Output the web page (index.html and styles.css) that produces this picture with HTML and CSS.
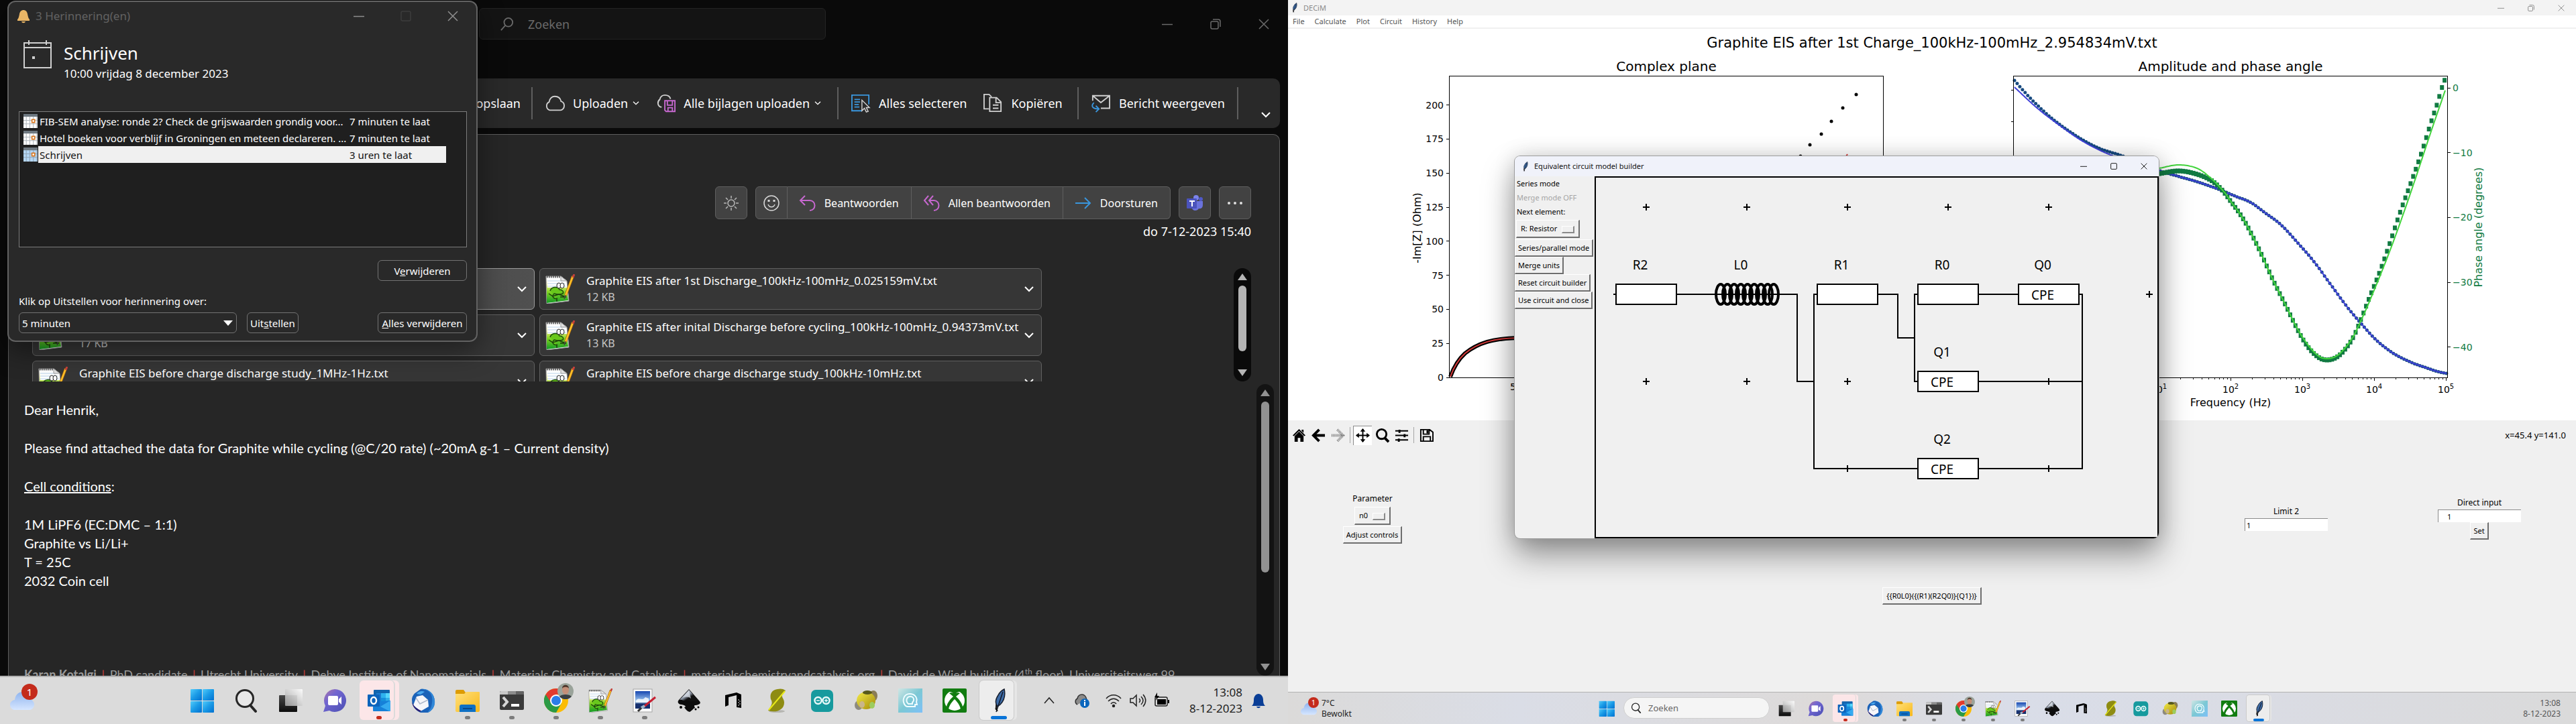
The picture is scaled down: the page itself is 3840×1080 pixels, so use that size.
FILE: index.html
```html
<!DOCTYPE html>
<html lang="nl">
<head>
<meta charset="utf-8">
<title>Bureaublad</title>
<link rel="stylesheet" href="styles.css">
</head>
<body>
<svg class="sprite" aria-hidden="true">
  <defs>
    <linearGradient id="gWin" x1="0" y1="0" x2="1" y2="1"><stop offset="0" stop-color="#52ccfb"/><stop offset=".5" stop-color="#1a9ae6"/><stop offset="1" stop-color="#0070d0"/></linearGradient>
    <linearGradient id="gDark" x1="0" y1="0" x2="0" y2="1"><stop offset="0" stop-color="#484848"/><stop offset="1" stop-color="#0c0c0c"/></linearGradient>
    <linearGradient id="gLight" x1="1" y1="0" x2="0" y2="1"><stop offset="0" stop-color="#fff"/><stop offset="1" stop-color="#a2a2a2"/></linearGradient>
    <linearGradient id="gChat" x1="0" y1="0" x2="1" y2="1"><stop offset="0" stop-color="#b277a4"/><stop offset=".35" stop-color="#7266d0"/><stop offset="1" stop-color="#4a50b4"/></linearGradient>
    <linearGradient id="gFold" x1="0" y1="0" x2="1" y2="1"><stop offset="0" stop-color="#ffe07a"/><stop offset="1" stop-color="#f8b81c"/></linearGradient>
    <linearGradient id="gCloud" x1="0" y1="0" x2="0" y2="1"><stop offset="0" stop-color="#8fb4ee"/><stop offset="1" stop-color="#d6e6ff"/></linearGradient>
    <linearGradient id="gInk" x1="0" y1="0" x2="1" y2="1"><stop offset="0" stop-color="#fff"/><stop offset=".45" stop-color="#8c95a4"/><stop offset=".6" stop-color="#111"/></linearGradient>
    <linearGradient id="gBall" x1="0" y1="0" x2="1" y2="1"><stop offset="0" stop-color="#f3ea4a"/><stop offset="1" stop-color="#a38a06"/></linearGradient>
    <linearGradient id="gAz" x1="0" y1="0" x2="1" y2="1"><stop offset="0" stop-color="#cfe6e4"/><stop offset=".5" stop-color="#7cc8d4"/><stop offset="1" stop-color="#7dc0f8"/></linearGradient>
    <linearGradient id="gNpp" x1="0" y1="0" x2="0" y2="1"><stop offset="0" stop-color="#fff"/><stop offset=".3" stop-color="#f4f08a"/><stop offset=".6" stop-color="#7ed321"/><stop offset="1" stop-color="#139a26"/></linearGradient>
    <linearGradient id="gPaint" x1="0" y1="0" x2="0" y2="1"><stop offset="0" stop-color="#1646b0"/><stop offset=".6" stop-color="#a8d0f4"/><stop offset=".75" stop-color="#16306e"/></linearGradient>
  </defs>
  <symbol id="win" viewBox="0 0 36 36"><rect x="1" y="1" width="17" height="17" rx="1" fill="url(#gWin)"/><rect x="19" y="1" width="17" height="17" rx="1" fill="url(#gWin)"/><rect x="1" y="19" width="17" height="17" rx="1" fill="url(#gWin)"/><rect x="19" y="19" width="17" height="17" rx="1" fill="url(#gWin)"/></symbol>
  <symbol id="search" viewBox="0 0 36 36"><circle cx="16" cy="15" r="12.500" fill="#fff" fill-opacity=".35" stroke="#262626" stroke-width="3"/><path d="M24 25l8 9" stroke="#262626" stroke-width="4" stroke-linecap="round"/></symbol>
  <symbol id="task" viewBox="0 0 36 36"><rect x="1" y="10" width="27" height="25" rx="1" fill="url(#gDark)"/><rect x="10" y="1" width="26" height="25" rx="1" fill="url(#gLight)" fill-opacity=".9"/></symbol>
  <symbol id="chat" viewBox="0 0 36 36"><path d="M18 1a17 17 0 1 1-8 32L1 35l3-9A17 17 0 0 1 18 1z" fill="url(#gChat)"/><rect x="8" y="11" width="15" height="14" rx="2" fill="#fff"/><path d="M24 16l4-4v12l-4-4z" fill="#fff"/></symbol>
  <symbol id="outlook" viewBox="0 0 36 36"><rect x="10" y="2" width="24" height="26" rx="1" fill="#1064ae"/><rect x="14" y="7" width="7" height="14" fill="#1b7bd0"/><rect x="21" y="7" width="7" height="7" fill="#2eb2ee"/><rect x="28" y="7" width="6" height="7" fill="#55d6fc"/><rect x="21" y="14" width="7" height="7" fill="#1690dc"/><rect x="28" y="14" width="6" height="7" fill="#30aee8"/><path d="M9 20l26-2v15a1 1 0 0 1-1 1H10a1 1 0 0 1-1-1z" fill="#1680d8"/><path d="M35 18L20 27l14 7h1z" fill="#35aaf0"/><rect x="1" y="9" width="18" height="18" rx="1" fill="#0c63bb"/><ellipse cx="10" cy="18" rx="4" ry="5" fill="none" stroke="#fff" stroke-width="2.500"/></symbol>
  <symbol id="bird" viewBox="0 0 36 36"><path d="M14 1C25-1 35 8 35 19c0 9-5 15-10 17H14C8 34 1 27 1 17c0-5 3-9 6-11z" fill="#1b62b8"/><path d="M14 1c11 0 19 6 17 20-1 8-3 11-7 15 8-3 12-10 11-18C34 7 25-1 14 1z" fill="#3188d8"/><path d="M8 8c3-4 8-5 12-3l-6 4z" fill="#4aa8ee"/><path d="M8 12l9-2 8 7 1 10-12 7-11-9z" fill="#f6f6fa"/><path d="M7 14l6 9 12-6" fill="none" stroke="#aeb8cb" stroke-width="1.500"/><path d="M1 20c3 7 8 11 14 13l-2 2C6 32 2 27 1 20z" fill="#2b1d72"/></symbol>
  <symbol id="folder" viewBox="0 0 36 36"><path d="M0 4a2 2 0 0 1 2-2h10l3 4v6H0z" fill="#dd9c04"/><path d="M0 8h13l3-3h19a1 1 0 0 1 1 1v27a2 2 0 0 1-2 2H2a2 2 0 0 1-2-2z" fill="url(#gFold)"/><path d="M6 35v-8a3 3 0 0 1 3-3h18a3 3 0 0 1 3 3v8z" fill="#0f70c4"/><path d="M11 30h14" stroke="#08488a" stroke-width="2"/></symbol>
  <symbol id="term" viewBox="0 0 36 36"><rect x="0" y="4" width="36" height="28" rx="2" fill="#3a3a3a"/><path d="M2 4h10v5H0V6a2 2 0 0 1 2-2z" fill="#c8c8c8"/><path d="M12 4h12v5H12z" fill="#8d8d8d"/><path d="M24 4h10a2 2 0 0 1 2 2v3H24z" fill="#646464"/><path d="M5 13l6 7-6 7" fill="none" stroke="#d6d6d6" stroke-width="4"/><rect x="17" y="23" width="12" height="4" fill="#fff"/></symbol>
  <symbol id="chrome" viewBox="0 0 36 36"><circle cx="18" cy="18" r="18" fill="#fbbc05"/><path d="M18 18L2.400 9A18 18 0 0 1 33.600 9H18z" fill="#e23b2e"/><path d="M2.400 9A18 18 0 0 0 18 36l8-14-8-4z" fill="#2b9a45"/><path d="M2.400 9L11 22l7-13z" fill="#e23b2e"/><circle cx="18" cy="18" r="9" fill="#fff"/><circle cx="18" cy="18" r="7" fill="#2b7de9"/></symbol>
  <symbol id="avatar" viewBox="0 0 24 24"><circle cx="12" cy="12" r="12" fill="#9aa39a"/><path d="M3 20c3-4 15-4 18 0a12 12 0 0 1-18 0z" fill="#3a3f42"/><ellipse cx="12" cy="10" rx="5" ry="7" fill="#c48f78"/><path d="M7 8c0-7 10-7 10 0-2-3-8-3-10 0z" fill="#4e372c"/></symbol>
  <symbol id="npp" viewBox="0 0 44 44"><path d="M1 3h22l9 7 3 30-33 4z" fill="#fff" stroke="#9a9a9a"/><path d="M2 3v40l32-4-2-19H3z" fill="url(#gNpp)"/><path d="M2 4h21" stroke="#444" stroke-width="3" stroke-dasharray="1.500 1.500"/><path d="M3 10h24M3 14h26M3 18h28" stroke="#b9d3ea"/><path d="M23 3v7h9z" fill="#e4e4e4" stroke="#999"/><path d="M7 25c2-7 12-7 14-2 4 0 7 3 5 6-5 2-10 1-13 0-4 4-1 9 5 7" fill="#68c71c" stroke="#1d4d0c" stroke-width="1.500"/><path d="M5 29l6 4 9-3 8 3M17 37v4M22 34h9" fill="none" stroke="#1d3d0c" stroke-width="1.500"/><ellipse cx="20" cy="17" rx="3" ry="4" fill="#fff" stroke="#222"/><ellipse cx="25" cy="17" rx="3" ry="4" fill="#fff" stroke="#222"/><path d="M41 3L30 32" stroke="#a46410" stroke-width="4"/><path d="M41 3L30 32" stroke="#ffc229" stroke-width="2.500"/><path d="M43 0l-2 5" stroke="#c4403a" stroke-width="3"/><path d="M30 31l-2 6" stroke="#444" stroke-width="1.500"/></symbol>
  <symbol id="paint" viewBox="0 0 36 36"><rect x="1" y="1" width="28" height="34" fill="#fafafa" stroke="#a6a6a6"/><rect x="4" y="4" width="22" height="26" fill="url(#gPaint)"/><path d="M5 18c5-6 9 2 14-5l5 2v6H5z" fill="#fff" opacity=".8"/><path d="M34 13L17 27" stroke="#c62032" stroke-width="3"/><path d="M18 26l-5 3" stroke="#9fb4c8" stroke-width="4"/><path d="M13 29l-5 5" stroke="#333" stroke-width="3"/></symbol>
  <symbol id="ink" viewBox="0 0 36 36"><path d="M18 1l15 17c4 4 1 6-5 7-4 0-1 3-1 4-3 1-4 4-8 6-4-1-6-4-8-7 4-1 1-3-4-4-5 0-7-4-4-7z" fill="#0c0c0c"/><path d="M18 2L4 17c5-1 6 3 10 1 4-1 5 3 9 1 4-1 5 1 9-1z" fill="url(#gInk)"/><path d="M18 3L8 14c5-2 9-2 13 1z" fill="#dfe5ec" opacity=".7"/><circle cx="32" cy="28" r="1.500"/><circle cx="28" cy="31" r="1.500"/><circle cx="6" cy="28" r="2"/></symbol>
  <symbol id="nlogo" viewBox="0 0 36 36"><path d="M6 10l17-4v4l-12 3v12l-5 2z"/><path d="M23 6l7 3v20l-7-1z"/><path d="M26 16v10M28 18v8" stroke="#ddd" stroke-dasharray="2 2"/></symbol>
  <symbol id="slogo" viewBox="0 0 36 36"><ellipse cx="17" cy="34" rx="12" ry="2" fill="#b5b5b0"/><path d="M18 1C10 2 6 8 8 16c3 5 2 8-4 17 12 4 24-1 24-12 0-6-4-7-3-11l5-7c-4-3-8-3-12-2z" fill="#8e8c12"/><path d="M29 4L5 32" stroke="#e9ea1a" stroke-width="2"/></symbol>
  <symbol id="ardu" viewBox="0 0 36 36"><rect x="2" y="2" width="33" height="33" rx="7" fill="#169a9e"/><circle cx="12.500" cy="18" r="5" fill="none" stroke="#e6f8f8" stroke-width="2.500"/><circle cx="24.500" cy="18" r="5" fill="none" stroke="#e6f8f8" stroke-width="2.500"/><path d="M10 18h5M22 18h5M24.500 15.500v5" stroke="#e6f8f8" stroke-width="1.500"/></symbol>
  <symbol id="ball" viewBox="0 0 36 36"><ellipse cx="29" cy="11" rx="6" ry="8" fill="#8b7d55"/><ellipse cx="7" cy="25" rx="6" ry="7" fill="#8d8a80"/><ellipse cx="18" cy="18" rx="14" ry="13" fill="url(#gBall)"/><ellipse cx="12" cy="24" rx="4" ry="5" fill="#c9b58a"/><ellipse cx="20" cy="6" rx="7" ry="3" fill="#57591c"/><ellipse cx="27" cy="25" rx="4" ry="5" fill="#9dcc5e"/></symbol>
  <symbol id="az" viewBox="0 0 36 36"><path d="M0 0h36v36H0z" fill="url(#gAz)"/><path d="M11 26C4 18 9 8 17 8c8 0 12 6 10 12l1 4h-3v3H13z" fill="none" stroke="#eefcff" stroke-width="2"/><path d="M15 23c-5-5-2-11 3-11s7 5 3 9v2z" fill="none" stroke="#eefcff" stroke-width="2"/></symbol>
  <symbol id="xbox" viewBox="0 0 36 36"><rect width="36" height="36" rx="2" fill="#117c10"/><circle cx="18" cy="18" r="15" fill="#fff"/><path d="M8 5c5-1 8 2 10 4 2-2 5-5 10-4-2-2-6-3-10-3S10 3 8 5zM16 12c-6 5-10 12-10 16l3 3c1-6 5-11 9-15 4 4 8 9 9 15l3-3c0-4-4-11-10-16l6-5c-3-2-6 0-8 1-2-1-5-3-8-1z" fill="#117c10"/></symbol>
  <symbol id="feather" viewBox="0 0 36 36"><path d="M26 1c2 9 0 17-6 23l-4 3c-4-5-3-11 1-17 2-4 5-7 9-9z" fill="#3d6ba6" stroke="#151d2c" stroke-width="1.500"/><path d="M24 5L14 35" stroke="#121826" stroke-width="1.500"/><path d="M14 24l2 10-3-3z" stroke="#111" fill="#111"/></symbol>
  <symbol id="weather" viewBox="0 0 36 30"><path d="M8 29a7.500 7.500 0 0 1-1-15C8 6 13 2 19 2c7 0 10 5 11 11 3 1 6 4 6 8s-3 8-7 8z" fill="url(#gCloud)"/></symbol>
  <symbol id="chev" viewBox="0 0 14 9"><path d="M1 1l6 6 6-6" fill="none" stroke="currentColor" stroke-width="2"/></symbol>
  <symbol id="wmin" viewBox="0 0 16 16"><path d="M0 8.500h16" stroke="currentColor" stroke-width="1.500"/></symbol>
  <symbol id="wmax" viewBox="0 0 16 16"><rect x="1" y="1" width="14" height="14" rx="2" fill="none" stroke="currentColor" stroke-width="1.500"/></symbol>
  <symbol id="wres" viewBox="0 0 16 16"><rect x="1" y="4" width="11" height="11" rx="2" fill="none" stroke="currentColor" stroke-width="1.500"/><path d="M4 1h8a3 3 0 0 1 3 3v8" fill="none" stroke="currentColor" stroke-width="1.500"/></symbol>
  <symbol id="wclose" viewBox="0 0 16 16"><path d="M1 1l14 14M15 1L1 15" stroke="currentColor" stroke-width="1.500"/></symbol>
  <symbol id="cal" viewBox="0 0 20 20"><rect width="20" height="20" fill="currentColor"/><rect width="20" height="4" fill="#6e7880"/><path d="M0 9h20M0 14h20M4 4v16M9 4v16M14 4v16M19 4v16" stroke="#7c868e" stroke-opacity=".6"/><path d="M12 8h4v4h-4z" fill="#fff" stroke="#d9771e" stroke-width="1.500"/></symbol>
</svg>

<main class="desktop">
<section class="screen screen-mail" aria-label="Linkerscherm">
  <div class="outlook">
    <header class="mail-title">
      <label class="mail-search"><svg viewBox="0 0 22 22"><circle cx="13" cy="8" r="7"/><path d="M8 13l-7 8"/></svg><input type="text" placeholder="Zoeken" aria-label="Zoeken"></label>
      <div class="caption-buttons wide">
        <button aria-label="Minimaliseren"><svg><use href="#wmin"/></svg></button><button aria-label="Vorig formaat"><svg><use href="#wres"/></svg></button><button aria-label="Sluiten"><svg><use href="#wclose"/></svg></button>
      </div>
    </header>
    <nav class="ribbon">
      <div class="group end"><button>opslaan</button></div>
      <div class="group">
        <button><svg class="ri" viewBox="0 0 32 26"><path d="M8 24a7 7 0 0 1-1-13C8 5 12 2 16 2c6 0 9 3 10 8 3 1 5 4 5 7 0 4-3 7-6 7z" fill="none" stroke="#d0d0d0" stroke-width="2"/></svg>Uploaden<svg class="mini"><use href="#chev"/></svg></button>
        <button><svg class="ri" viewBox="0 0 32 28"><path d="M10 20H8A7 7 0 0 1 7 8C8 3 12 1 15 1c5 0 8 2 9 6" fill="none" stroke="#d0d0d0" stroke-width="2"/><path d="M15 10h16v17H17l-2-2zM19 10v7h8v-7M20 27v-6h7v6" fill="none" stroke="#c668cf" stroke-width="2"/></svg>Alle bijlagen uploaden<svg class="mini"><use href="#chev"/></svg></button>
      </div>
      <div class="group">
        <button><svg class="ri" viewBox="0 0 32 30"><path d="M18 27H2V2h27v15" fill="none" stroke="#3a96dd" stroke-width="2"/><path d="M6 9h9M6 13h9M6 17h7M6 21h8" stroke="#3a96dd" stroke-width="2"/><path d="M18 10v17l4-4 3 6 3-1-3-6h5z" fill="#2b2b2b" stroke="#d6d6d6" stroke-width="1.500"/></svg>Alles selecteren</button>
        <button><svg class="ri" viewBox="0 0 32 30"><path d="M10 24H2V1h8l4 4" fill="none" stroke="#d0d0d0" stroke-width="2"/><path d="M11 6h11l7 7v15H11zM21 6v8h8M16 18h9M16 23h9" fill="none" stroke="#d0d0d0" stroke-width="2"/></svg>Kopiëren</button>
      </div>
      <div class="group">
        <button><svg class="ri" viewBox="0 0 32 30"><path d="M3 11V3h27v20H16M3 3l13 11L30 3" fill="none" stroke="#d0d0d0" stroke-width="2"/><path d="M5 14c-5 5-3 10 7 10M8 19l5 5-5 5" fill="none" stroke="#3a96dd" stroke-width="2"/></svg>Bericht weergeven</button>
      </div>
      <div class="ribbon-more"><button aria-label="Meer"><svg class="chev"><use href="#chev"/></svg></button></div>
    </nav>

    <article class="mail">
      <div class="actions">
        <button class="sq" aria-label="Achtergrond"><svg viewBox="0 0 24 24" fill="none" stroke="#b8b8b8" stroke-width="1.500"><circle cx="12" cy="12" r="5"/><path d="M12 1v4M12 19v4M1 12h4M19 12h4M4 4l3 3M17 17l3 3M20 4l-3 3M7 17l-3 3"/></svg></button>
        <div class="action-group">
          <button class="sq" aria-label="Reactie"><svg viewBox="0 0 24 24" fill="none" stroke="#d8d8d8" stroke-width="1.500"><circle cx="12" cy="12" r="11"/><path d="M7 14c2 5 8 5 10 0"/><path d="M8 7v3M16 7v3" stroke-width="3"/></svg></button>
          <button class="reply"><svg viewBox="0 0 24 24" fill="none" stroke="#c668cf" stroke-width="2"><path d="M8 1L1 8l7 7M1 8h14c10 0 10 15 0 15"/></svg>Beantwoorden</button>
          <button class="reply"><svg viewBox="0 0 24 24" fill="none" stroke="#c668cf" stroke-width="2"><path d="M7 1L1 8l6 7M14 1L8 8l6 7M8 8h7c10 0 10 15 0 15"/></svg>Allen beantwoorden</button>
          <button class="reply"><svg viewBox="0 0 24 24" fill="none" stroke="#3a96dd" stroke-width="2"><path d="M0 12h22M14 4l8 8-8 8"/></svg>Doorsturen</button>
        </div>
        <button class="sq" aria-label="Teams"><svg viewBox="0 0 24 24"><circle cx="14" cy="4" r="4" fill="#7b83eb"/><circle cx="21" cy="6" r="3" fill="#5059c9"/><path d="M8 9h16v6c0 5-5 6-6 5-2 4-8 4-10 0z" fill="#6a72dc"/><rect y="5" width="15" height="15" rx="1" fill="#4b53bc"/><path d="M4 9h8M8 9v8" stroke="#fff" stroke-width="2"/></svg></button>
        <button class="sq" aria-label="Meer acties"><svg viewBox="0 0 24 24" fill="#e0e0e0"><circle cx="3" cy="12" r="2"/><circle cx="12" cy="12" r="2"/><circle cx="21" cy="12" r="2"/></svg></button>
      </div>
      <p class="date">do 7-12-2023 15:40</p>

      <div class="attach-area">
        <div class="attachments">
          <div class="card active"><svg class="file"><use href="#npp"/></svg><p class="name"></p><button aria-label="Opties"><svg class="chev"><use href="#chev"/></svg></button></div>
          <div class="card"><svg class="file"><use href="#npp"/></svg><p class="name">Graphite EIS after 1st Discharge_100kHz-100mHz_0.025159mV.txt<br><span>12 KB</span></p><button aria-label="Opties"><svg class="chev"><use href="#chev"/></svg></button></div>
          <div class="card"><svg class="file"><use href="#npp"/></svg><p class="name"><br><span>17 KB</span></p><button aria-label="Opties"><svg class="chev"><use href="#chev"/></svg></button></div>
          <div class="card"><svg class="file"><use href="#npp"/></svg><p class="name">Graphite EIS after inital Discharge before cycling_100kHz-100mHz_0.94373mV.txt<br><span>13 KB</span></p><button aria-label="Opties"><svg class="chev"><use href="#chev"/></svg></button></div>
          <div class="card"><svg class="file"><use href="#npp"/></svg><p class="name">Graphite EIS before charge discharge study_1MHz-1Hz.txt<br>&nbsp;</p><button aria-label="Opties"><svg class="chev"><use href="#chev"/></svg></button></div>
          <div class="card"><svg class="file"><use href="#npp"/></svg><p class="name">Graphite EIS before charge discharge study_100kHz-10mHz.txt<br>&nbsp;</p><button aria-label="Opties"><svg class="chev"><use href="#chev"/></svg></button></div>
        </div>
        <div class="scroll scroll-attach"><i class="up"></i><b></b><i class="down"></i></div>
      </div>

      <div class="body-area">
        <div class="letter">
          <p>Dear Henrik,</p>
          <p>Please find attached the data for Graphite while cycling (@C/20 rate) (~20mA g-1 – Current density)</p>
          <p><u>Cell conditions</u>:</p>
          <p>1M LiPF6 (EC:DMC – 1:1)<br>Graphite vs Li/Li+<br>T = 25C<br>2032 Coin cell</p>
          <p class="signature"><strong>Karan Kotalgi</strong> <i>|</i> PhD candidate <i>|</i> Utrecht University <i>|</i> Debye Institute of Nanomaterials <i>|</i> Materials Chemistry and Catalysis <i>|</i> materialschemistryandcatalysis.org <i>|</i> David de Wied building (4<sup>th</sup> floor), Universiteitsweg 99</p>
        </div>
        <div class="scroll scroll-body"><i class="up"></i><b></b><i class="down"></i></div>
      </div>
    </article>
  </div>

  <footer class="taskbar big">
    <div class="weather"><svg><use href="#weather"/></svg><span class="badge">1</span></div>
    <nav class="apps">
      <button aria-label="Start"><svg><use href="#win"/></svg></button>
      <button aria-label="Zoeken"><svg><use href="#search"/></svg></button>
      <button aria-label="Taakweergave"><svg><use href="#task"/></svg></button>
      <button aria-label="Chat"><svg><use href="#chat"/></svg></button>
      <button aria-label="Outlook" class="alert"><svg><use href="#outlook"/></svg></button>
      <button aria-label="Thunderbird"><svg><use href="#bird"/></svg></button>
      <button aria-label="Verkenner" class="open"><svg><use href="#folder"/></svg></button>
      <button aria-label="Terminal" class="open"><svg><use href="#term"/></svg></button>
      <button aria-label="Chrome" class="open"><svg><use href="#chrome"/></svg><svg class="avatar"><use href="#avatar"/></svg></button>
      <button aria-label="Notepad++" class="open"><svg><use href="#npp"/></svg></button>
      <button aria-label="Paint" class="open"><svg><use href="#paint"/></svg></button>
      <button aria-label="Inkscape"><svg><use href="#ink"/></svg></button>
      <button aria-label="Notebook"><svg><use href="#nlogo"/></svg></button>
      <button aria-label="Scilab"><svg><use href="#slogo"/></svg></button>
      <button aria-label="Arduino"><svg><use href="#ardu"/></svg></button>
      <button aria-label="Modeller"><svg><use href="#ball"/></svg></button>
      <button aria-label="Assistent"><svg><use href="#az"/></svg></button>
      <button aria-label="Xbox"><svg><use href="#xbox"/></svg></button>
      <button aria-label="DECiM" class="current"><svg><use href="#feather"/></svg></button>
    </nav>
    <div class="tray">
      <svg viewBox="0 0 24 24"><path d="M5 16l7-8 7 8" fill="none" stroke="#222" stroke-width="1.500"/></svg>
      <svg class="push" viewBox="0 0 24 24"><path d="M6 18a5 5 0 0 1 0-9c1-5 4-6 7-6s6 3 7 8" fill="#8a8a8a" stroke="#333" stroke-width="1.500"/><circle cx="17" cy="16" r="7" fill="#0a66bd"/><path d="M17 14v6M17 11v2" stroke="#fff" stroke-width="2"/></svg>
      <svg class="push" viewBox="0 0 24 24" fill="none" stroke="#222" stroke-width="1.500"><path d="M1 9c6-7 16-7 22 0M4 13c5-5 11-5 16 0M8 17c2-3 6-3 8 0"/><circle cx="12" cy="20" r="1.500" fill="#222"/></svg>
      <svg viewBox="0 0 24 24" fill="none" stroke="#222" stroke-width="1.500"><path d="M1 9h4l5-5v16l-5-5H1zM14 9c2 2 2 4 0 6M17 6c4 4 4 8 0 12M20 3c5 6 5 12 0 18"/></svg>
      <svg viewBox="0 0 24 24"><rect x="2" y="7" width="18" height="13" rx="2" fill="none" stroke="#222" stroke-width="1.500"/><rect x="5" y="10" width="13" height="8"/><path d="M21 11h2v5h-2zM5 0L1 7h3l-1 5 5-7H5z"/></svg>
      <time>13:08<br>8-12-2023</time>
      <svg viewBox="0 0 24 24"><path d="M2 20c2-2 3-4 3-9 0-5 3-9 7-9s7 4 7 9c0 5 1 7 3 9zM9 21h6c-1 3-5 3-6 0z" fill="#0a3e96"/></svg>
    </div>
  </footer>

  <section class="reminder" role="dialog" aria-label="Herinneringen">
    <header><svg class="bell" viewBox="0 0 20 20"><path d="M1 15c2-2 2-4 3-8 1-8 11-8 12 0 1 4 1 6 3 8v2H1zM7 18h6c-1 3-5 3-6 0z" fill="#e9b565"/></svg><span>3 Herinnering(en)</span>
      <div class="caption-buttons"><button aria-label="Minimaliseren"><svg><use href="#wmin"/></svg></button><button aria-label="Maximaliseren" disabled><svg><use href="#wmax"/></svg></button><button aria-label="Sluiten"><svg><use href="#wclose"/></svg></button></div>
    </header>
    <div class="subject"><svg viewBox="0 0 42 42"><path d="M1 4h40v37H1zM1 11h40M8 0v7M34 0v7" fill="none" stroke="#d0d0d0" stroke-width="2"/><path d="M13 24h4v4h-4z" fill="#d0d0d0"/></svg><div><h1>Schrijven</h1><p>10:00 vrijdag 8 december 2023</p></div></div>
    <div class="list">
      <table>
        <tr><td><svg><use href="#cal"/></svg></td><td>FIB-SEM analyse: ronde 2? Check de grijswaarden grondig voor...</td><td>7 minuten te laat</td></tr>
        <tr><td><svg><use href="#cal"/></svg></td><td>Hotel boeken voor verblijf in Groningen en meteen declareren. ...</td><td>7 minuten te laat</td></tr>
        <tr class="selected"><td><svg><use href="#cal"/></svg></td><td>Schrijven</td><td>3 uren te laat</td></tr>
      </table>
    </div>
    <div class="row right"><button class="btn w">V<u>e</u>rwijderen</button></div>
    <label for="snooze">Klik op Uitstellen voor herinnering over:</label>
    <div class="row"><div class="combo"><select id="snooze"><option>5 minuten</option></select></div><button class="btn">Uit<u>s</u>tellen</button><button class="btn w last"><u>A</u>lles verwijderen</button></div>
  </section>
</section>

<section class="screen screen-decim" aria-label="Rechterscherm">
  <div class="decim">
    <header class="app-title"><svg class="fic"><use href="#feather"/></svg><span>DECiM</span>
      <div class="caption-buttons small"><button aria-label="Minimaliseren"><svg><use href="#wmin"/></svg></button><button aria-label="Vorig formaat"><svg><use href="#wres"/></svg></button><button aria-label="Sluiten"><svg><use href="#wclose"/></svg></button></div></header>
    <nav class="menu"><button>File</button><button>Calculate</button><button>Plot</button><button>Circuit</button><button>History</button><button>Help</button></nav>
    <svg class="figure" viewBox="0 43 1920 584" role="img" aria-label="Impedance plots">
      <text class="t main" x="960" y="71">Graphite EIS after 1st Charge_100kHz-100mHz_2.954834mV.txt</text>
      <text class="t" x="564" y="106">Complex plane</text>
      <text class="t" x="1405" y="106">Amplitude and phase angle</text>
      <g id="nyquist"></g>
      <g id="bode"></g>
      <rect class="frame" x="240" y="113" width="647" height="450"/>
      <rect class="frame" x="1081" y="113" width="647" height="450"/>
      <g id="ticks"></g>
      <text class="l" transform="translate(198 340) rotate(-90)">-Im[Z] (Ohm)</text>
      <text class="l green" transform="translate(1780 339) rotate(-90)">Phase angle (degrees)</text>
      <text class="l" x="1405" y="606">Frequency (Hz)</text>
    </svg>
    <div class="navbar">
      <button aria-label="Home"><svg viewBox="0 0 22 22"><path d="M11 1l10 10-2 1-8-8-8 8-2-1zM4 12l7-7 7 7v9h-5v-6H9v6H4zM15 2h3v5l-3-3z"/></svg></button>
      <button aria-label="Back"><svg viewBox="0 0 22 22"><path d="M12 2L3 11l9 9M4 11h17" fill="none" stroke="#000" stroke-width="4"/></svg></button>
      <button aria-label="Forward" disabled><svg viewBox="0 0 22 22"><path d="M10 2l9 9-9 9M18 11H1" fill="none" stroke="#777" stroke-width="4" stroke-dasharray="1 1"/></svg></button>
      <hr>
      <button aria-label="Pan" class="pressed"><svg viewBox="0 0 22 22"><path d="M11 1v20M1 11h20" stroke="#000" stroke-width="2"/><path d="M11 0l4 5H7zM11 22l4-5H7zM0 11l5-4v8zM22 11l-5-4v8z"/></svg></button>
      <button aria-label="Zoom"><svg viewBox="0 0 22 22"><circle cx="10" cy="9" r="7.500" fill="none" stroke="#000" stroke-width="3"/><path d="M15 15l6 6" stroke="#000" stroke-width="4"/></svg></button>
      <button aria-label="Subplots"><svg viewBox="0 0 22 22"><path d="M1 4h20M1 11h20M1 18h20" stroke="#000" stroke-width="2"/><path d="M6 2h3v5H6zM14 9h3v5h-3zM5 16h3v5H5z"/></svg></button>
      <hr>
      <button aria-label="Save"><svg viewBox="0 0 22 22"><path d="M2 2h14l5 4v14H2zM6 2v7h9V2M6 20v-7h11v7" fill="none" stroke="#000" stroke-width="2"/><path d="M11 3h3v5h-3z"/></svg></button>
      <output>x=45.4 y=141.0</output>
    </div>
    <div class="controls">
      <div class="ctl"><label for="param">Parameter</label><div class="tk-menu"><select id="param"><option>n0</option></select></div><button class="tk">Adjust controls</button></div>
      <div class="ctl limit"><label for="lim">Limit 2</label><input id="lim" type="text" value="1"></div>
      <div class="ctl"><label for="direct">Direct input</label><input id="direct" class="indent" type="text" value="1"><button class="tk set">Set</button></div>
    </div>
    <button class="tk formula">{{R0L0}({(R1)(R2Q0)}{Q1})}</button>
  </div>

  <footer class="taskbar compact">
    <div class="weather"><svg><use href="#weather"/></svg><span class="badge">1</span><p>7°C<br>Bewolkt</p></div>
    <nav class="apps">
      <button aria-label="Start"><svg><use href="#win"/></svg></button>
      <label class="pill"><svg><use href="#search"/></svg><input type="text" placeholder="Zoeken" aria-label="Zoeken"></label>
      <button aria-label="Taakweergave"><svg><use href="#task"/></svg></button>
      <button aria-label="Chat"><svg><use href="#chat"/></svg></button>
      <button aria-label="Outlook" class="alert"><svg><use href="#outlook"/></svg></button>
      <button aria-label="Thunderbird"><svg><use href="#bird"/></svg></button>
      <button aria-label="Verkenner" class="open"><svg><use href="#folder"/></svg></button>
      <button aria-label="Terminal" class="open"><svg><use href="#term"/></svg></button>
      <button aria-label="Chrome" class="open"><svg><use href="#chrome"/></svg><svg class="avatar"><use href="#avatar"/></svg></button>
      <button aria-label="Notepad++" class="open"><svg><use href="#npp"/></svg></button>
      <button aria-label="Paint" class="open"><svg><use href="#paint"/></svg></button>
      <button aria-label="Inkscape"><svg><use href="#ink"/></svg></button>
      <button aria-label="Notebook"><svg><use href="#nlogo"/></svg></button>
      <button aria-label="Scilab"><svg><use href="#slogo"/></svg></button>
      <button aria-label="Arduino"><svg><use href="#ardu"/></svg></button>
      <button aria-label="Modeller"><svg><use href="#ball"/></svg></button>
      <button aria-label="Assistent"><svg><use href="#az"/></svg></button>
      <button aria-label="Xbox"><svg><use href="#xbox"/></svg></button>
      <button aria-label="DECiM" class="current"><svg><use href="#feather"/></svg></button>
    </nav>
    <time>13:08<br>8-12-2023</time>
  </footer>

  <section class="builder" role="dialog" aria-label="Equivalent circuit model builder">
    <header class="app-title"><svg class="fic"><use href="#feather"/></svg><span>Equivalent circuit model builder</span>
      <div class="caption-buttons small"><button aria-label="Minimaliseren"><svg><use href="#wmin"/></svg></button><button aria-label="Maximaliseren"><svg><use href="#wmax"/></svg></button><button aria-label="Sluiten"><svg><use href="#wclose"/></svg></button></div></header>
    <div class="builder-body">
      <aside>
        <p>Series mode</p><p class="off">Merge mode OFF</p><label for="elem">Next element:</label>
        <div class="tk-menu wide"><select id="elem"><option>R: Resistor</option></select></div>
        <button class="tk">Series/parallel mode</button><button class="tk">Merge units</button><button class="tk">Reset circuit builder</button><button class="tk">Use circuit and close</button>
      </aside>
      <svg class="circuit" viewBox="457 263 841 540" role="img" aria-label="Circuit">
        <path class="wire" d="M485 439h4M579 439h58M732 439h27v130h25M789 439h-5v260h155M879 439h30v65h25M939 439h-5v130h5M1029 439h60M1179 439h5v260h-155M1029 569h155"/>
        <path class="wire" d="M529 309h10m-5-5v10M679 309h10m-5-5v10M829 309h10m-5-5v10M979 309h10m-5-5v10M1129 309h10m-5-5v10M1279 439h10m-5-5v10M529 569h10m-5-5v10M679 569h10m-5-5v10M829 569h10m-5-5v10M1134 564v10M834 694v10M1134 694v10"/>
        <g class="box"><rect x="489" y="424" width="90" height="30"/><rect x="789" y="424" width="90" height="30"/><rect x="939" y="424" width="90" height="30"/><rect x="1089" y="424" width="90" height="30"/><rect x="939" y="554" width="90" height="30"/><rect x="939" y="684" width="90" height="30"/></g>
        <path class="wire" d="M637 439h95"/>
        <g class="coil"><ellipse cx="645" cy="439" rx="7" ry="15"/><ellipse cx="655" cy="439" rx="7" ry="15"/><ellipse cx="665" cy="439" rx="7" ry="15"/><ellipse cx="675" cy="439" rx="7" ry="15"/><ellipse cx="685" cy="439" rx="7" ry="15"/><ellipse cx="695" cy="439" rx="7" ry="15"/><ellipse cx="705" cy="439" rx="7" ry="15"/><ellipse cx="715" cy="439" rx="7" ry="15"/><ellipse cx="724" cy="439" rx="7" ry="15"/></g>
        <text x="525" y="402">R2</text><text x="675" y="402">L0</text><text x="825" y="402">R1</text><text x="975" y="402">R0</text><text x="1125" y="402">Q0</text><text x="975" y="532">Q1</text><text x="975" y="662">Q2</text>
        <text x="1125" y="447">CPE</text><text x="975" y="577">CPE</text><text x="975" y="707">CPE</text>
      </svg>
    </div>
  </section>
</section>
</main>
<script src="plot.js"></script>
</body>
</html>
```
FILE: styles.css
```css
* { box-sizing: border-box; }
html, body { margin: 0; height: 100%; }
body { font-family: "Noto Sans", "Open Sans", sans-serif; font-size: 17px; line-height: 24px; overflow: hidden; }
p, h1 { margin: 0; font-weight: 400; }
button, input, select { font: inherit; color: inherit; background: none; border: 0; padding: 0; margin: 0; border-radius: 0; outline: 0; }
svg { display: block; flex: none; overflow: visible; }
.sprite { position: absolute; width: 0; height: 0; }

.desktop { display: grid; grid-template-columns: 1fr 1fr; height: 100vh; }
.screen { position: relative; display: flex; flex-direction: column; min-width: 0; min-height: 0; overflow: hidden; }
.screen-mail { background: #0a0a0a; color: #fff; }
.screen-decim { background: #f0f0f0; color: #000; font-size: 11px; line-height: 18px; }

/* window captions */
.caption-buttons { display: flex; margin-left: auto; align-self: stretch; color: #8f8f8f; }
.caption-buttons button { width: 70px; display: grid; place-items: center; }
.caption-buttons svg { width: 16px; height: 16px; }
.caption-buttons button:disabled { color: #3c3c3c; }
.caption-buttons.wide { height: 72px; color: #6b6b6b; }
.caption-buttons.wide button { width: 72px; }
.caption-buttons.small button { width: 45px; }
.caption-buttons.small svg { width: 10px; height: 10px; }
.caption-buttons.small { color: inherit; }

/* mail window */
.outlook { flex: 1; min-height: 0; display: flex; flex-direction: column; }
.mail-title { display: flex; align-items: flex-start; height: 117px; padding-left: 714px; font-size: 18px; }
.mail-search { display: flex; align-items: center; gap: 21px; width: 517px; height: 47px; margin-top: 12px; padding-left: 31px; background: #141414; border: 1px solid #232323; border-radius: 6px; color: #6a6a6a; }
.mail-search svg { width: 20px; height: 22px; fill: none; stroke: #6a6a6a; stroke-width: 2; }
.mail-search input { flex: 1; min-width: 0; }
input::placeholder { color: inherit; opacity: 1; }
.ribbon { display: grid; grid-template-columns: 782px 456px 358px 238px 1fr; margin: 0 12px; padding: 13px 0; background: #292929; border-radius: 10px; font-size: 18px; }
.group { display: flex; align-items: center; gap: 24px; height: 48px; padding-left: 18px; border-right: 2px solid #5e5e5e; white-space: nowrap; }
.group.end { justify-content: flex-end; padding-right: 16px; }
.group button { display: flex; align-items: center; gap: 12px; }
.ri { width: 30px; height: 28px; }
.mini { width: 10px; height: 6px; margin-left: -5px; }
.chev { width: 14px; height: 9px; }
.ribbon-more { display: flex; justify-content: flex-end; align-items: flex-end; padding: 0 14px 2px 0; }

.mail { flex: 1; min-height: 0; display: flex; flex-direction: column; margin: 9px 12px 0; border: 1px solid #5c5c5c; border-bottom: 0; border-radius: 10px 10px 0 0; background: #262626; }
.actions { display: flex; justify-content: flex-end; gap: 12px; margin: 77px 42px 0 0; font-size: 16px; }
.actions button { display: flex; align-items: center; justify-content: center; gap: 13px; height: 49px; background: #424242; border: 1px solid #5f5f5f; border-radius: 6px; }
.actions svg { width: 24px; height: 24px; }
.actions .sq { width: 48px; }
.action-group { display: flex; }
.action-group button { border-radius: 0; border-left-width: 0; }
.action-group button:first-child { border-radius: 6px 0 0 6px; border-left-width: 1px; }
.action-group button:last-child { border-radius: 0 6px 6px 0; }
.actions .reply { padding: 0 18px; }
.date { margin: 6px 42px 43px 0; text-align: right; font-size: 18px; }

.attach-area { display: flex; justify-content: space-between; height: 169px; padding: 0 42px 0 35px; }
.attachments { display: grid; grid-template-columns: 749px 749px; grid-auto-rows: 62px; gap: 7px; overflow: hidden; }
.card { display: flex; align-items: center; gap: 17px; padding: 0 11px 0 8px; background: #363636; border: 1px solid #606060; border-radius: 6px; }
.card.active { background: linear-gradient(90deg, #333, #505050); border-color: #9c9c9c; }
.card .name { flex: 1; min-width: 0; font-size: 17px; white-space: nowrap; }
.card span { color: #c6c6c6; font-size: 16px; }
.file { width: 44px; height: 44px; }
.scroll { display: flex; flex-direction: column; align-items: center; gap: 8px; width: 26px; padding: 8px 0; background: #0a0a0a; border-radius: 13px; color: #b4b4b4; }
.scroll i { border: 7px solid transparent; }
.scroll .up { border-top: 0; border-bottom: 10px solid currentColor; }
.scroll .down { border-bottom: 0; border-top: 10px solid currentColor; margin-top: auto; }
.scroll b { width: 12px; border-radius: 6px; background: currentColor; }
.scroll-attach b { flex: 0 0 98px; }
.scroll-body b { flex: 0 0 255px; }
.scroll-body { background: #131313; color: #929292; }
.body-area { flex: 1; min-height: 0; display: flex; justify-content: space-between; margin: 4px 8px 0 23px; overflow: hidden; }
.letter { padding-top: 24px; font-family: Lato, sans-serif; font-size: 20px; line-height: 28px; }
.letter p + p { margin-top: 29px; }
.letter p.signature { margin-top: 112px; font-size: 18px; color: #9a9a9a; white-space: nowrap; }
.signature i { font-style: normal; color: #c8403c; margin: 0 3px; }
.signature sup { font-size: 12px; line-height: 0; }

/* reminder window */
.reminder { position: absolute; left: 11px; top: 1px; width: 701px; padding: 0 14px 11px 15px; background: #292929; border: 2px solid #626262; border-radius: 12px; font-size: 15px; box-shadow: 0 12px 40px rgba(0,0,0,.45); }
.reminder header { display: flex; align-items: center; height: 42px; margin: 0 -14px 0 -3px; font-size: 17px; color: #626262; }
.bell { width: 20px; height: 20px; margin-right: 8px; }
.subject { display: flex; gap: 18px; margin: 15px 0 44px 7px; }
.subject svg { width: 42px; height: 42px; }
.subject h1 { font-size: 26px; line-height: 32px; margin: 3px 0; }
.subject p { font-size: 17px; }
.list { height: 203px; padding: 1px 30px 0 4px; border: 1px solid #7c7c7c; background: #1f1f1f; }
.list table { width: 100%; border-collapse: collapse; table-layout: fixed; }
.list td { height: 25px; padding: 0 2px; line-height: 24px; white-space: nowrap; }
.list td:first-child { width: 24px; }
.list td:last-child { width: 146px; }
.list svg { width: 21px; height: 21px; color: #fff; }
.selected td + td { background: #f0f0f0; color: #111; }
.selected svg { color: #b4d6f4; }
.row { display: flex; gap: 15px; margin-top: 5px; }
.row.right { justify-content: flex-end; margin: 19px 0 18px; }
.btn { height: 31px; padding: 0 4px; border: 1px solid #727272; border-radius: 6px; white-space: nowrap; }
.btn.w { width: 133px; }
.btn.last { margin-left: auto; }
.combo { position: relative; width: 325px; height: 31px; border: 1px solid #727272; border-radius: 6px; }
.combo select { width: 100%; height: 100%; padding-left: 4px; appearance: none; }
.combo::after { content: ""; position: absolute; right: 5px; top: 11px; border: 7px solid transparent; border-top: 8px solid #fff; border-bottom: 0; }

/* taskbars */
.taskbar { display: grid; align-items: center; color: #222; }
.taskbar.big { --cell: 66px; --icon: 36px; height: 72px; grid-template-columns: 268px 1fr auto; background: #dbdbdb; border-top: 2px solid #b2b2b2; }
.taskbar.compact { --cell: 44px; --icon: 24px; height: 48px; grid-template-columns: 453px 1fr auto; background: linear-gradient(90deg, #dbdad9, #dadde6 18%, #dddad9 42%, #d9dde8 56%, #dadce4 75%, #dadada); border-top: 1px solid #b2b2b2; font-size: 12px; }
.apps { display: flex; height: 100%; align-items: stretch; }
.apps button { position: relative; width: var(--cell); display: grid; place-items: center; }
.apps svg { width: var(--icon); height: var(--icon); position: relative; }
.apps .avatar { position: absolute; width: 24px; height: 24px; right: 7px; top: 9px; }
.compact .apps .avatar { width: 16px; height: 16px; right: 5px; top: 6px; }
.apps .open::after, .apps .alert::after, .apps .current::after { content: ""; position: absolute; bottom: 7px; width: 8px; height: 5px; border-radius: 3px; background: #7c7c7c; }
.compact .apps .open::after, .compact .apps .alert::after { bottom: 4px; width: 6px; height: 4px; }
.apps .alert::after { background: #c42b1c; }
.apps .current::after { width: 24px; background: #0a74d8; }
.compact .apps .current::after { width: 16px; height: 4px; bottom: 4px; }
.apps .alert::before, .apps .current::before { content: ""; position: absolute; inset: 5px 11px 6px 4px; border-radius: 6px; background: #fce6e8; box-shadow: 2px 0 #dbdbdb, 8px 0 #fce6e8; }
.apps .current::before { background: #ededed; box-shadow: 0 0 0 1px #cbcbcb, 5px 0 #e6e6e6; }
.compact .apps .alert::before { inset: 3px 7px 3px 3px; border-radius: 4px; box-shadow: 1px 0 #dbdbdb, 4px 0 #fce6e8; }
.compact .apps .current::before { inset: 4px 6px 4px 4px; border-radius: 4px; box-shadow: 0 0 0 1px #cbcbcb, 3px 0 #e6e6e6; }
.weather { position: relative; display: flex; align-items: center; padding-left: 15px; }
.weather svg { width: 36px; height: 30px; }
.badge { position: absolute; left: 32px; top: -10px; width: 24px; height: 24px; border-radius: 50%; background: #c42b1c; color: #fff; font-size: 15px; line-height: 24px; text-align: center; }
.compact .weather { padding-left: 19px; gap: 7px; line-height: 16px; }
.compact .weather svg { width: 24px; height: 20px; }
.compact .badge { left: 30px; top: -1px; width: 16px; height: 16px; font-size: 11px; line-height: 16px; }
.tray { display: flex; align-items: center; gap: 12px; padding-right: 32px; }
.tray svg { width: 24px; height: 24px; }
.tray .push { margin-left: 12px; }
.tray time { width: 96px; text-align: right; }
.compact time { padding-right: 23px; line-height: 16px; text-align: right; color: #555; }
.pill { display: flex; align-items: center; gap: 10px; width: 218px; height: 32px; margin: 7px 3px; padding-left: 10px; background: #f5f5f5; border: 1px solid #cfcfcf; border-radius: 16px; color: #666; font-size: 13px; }
.pill input { flex: 1; min-width: 0; }
.pill svg { width: 16px; height: 16px; }

/* DECiM window */
.decim { flex: 1; min-height: 0; display: flex; flex-direction: column; }
.app-title { display: flex; align-items: center; height: 23px; background: #f3f3f3; color: #8a8a8a; }
.fic { width: 15px; height: 15px; margin: 0 6px 0 2px; }
.menu { display: flex; gap: 15px; height: 20px; padding-left: 7px; background: #fff; border-bottom: 2px solid #f0f0f0; color: #555; }
.figure { width: 100%; height: auto; background: #fff; font-family: "DejaVu Sans", sans-serif; }
.figure text { font-size: 14px; text-anchor: middle; }
.figure .t { font-size: 20px; }
.figure .main { font-size: 21px; }
.figure .l { font-size: 16px; }
.figure .end { text-anchor: end; }
.figure .start { text-anchor: start; }
.figure .green { fill: #117a42; }
.figure .sup { font-size: 10px; }
.frame { fill: none; stroke: #000; stroke-width: 1; shape-rendering: crispEdges; }
.tick { stroke: #000; stroke-width: 1; shape-rendering: crispEdges; }
.curve { fill: none; stroke-width: 2; }
.navbar { display: flex; align-items: center; gap: 1px; height: 44px; padding: 0 15px 0 2px; }
.navbar button { width: 28px; height: 29px; display: grid; place-items: center; }
.navbar svg { width: 21px; height: 21px; }
.navbar .pressed { background: #fff; border-left: 1px solid #8c8c8c; border-top: 1px solid #8c8c8c; }
.navbar hr { width: 1px; height: 24px; margin: 0 3px; border: 0; background: #a6a6a6; }
.navbar output { margin-left: auto; font-size: 13px; }
.controls { display: grid; grid-template-columns: 252px 1fr 288px; align-items: center; padding-top: 64px; }
.ctl { display: flex; flex-direction: column; align-items: center; }
.ctl.limit { justify-self: end; width: 288px; }
.ctl label { font-size: 12px; }
.ctl input { width: 124px; height: 19px; margin-top: 1px; padding-left: 2px; background: #fff; border-left: 1px solid #8a8a8a; border-top: 1px solid #8a8a8a; }
.ctl input.indent { padding-left: 13px; }
.tk { height: 26px; padding: 0 4px; border: 1px solid #fff; border-right: 2px solid #6e6e6e; border-bottom: 2px solid #6e6e6e; line-height: 20px; white-space: nowrap; }
.tk-menu { position: relative; width: 54px; height: 27px; margin: 3px 0 2px; border: 1px solid #fff; border-right: 2px solid #6e6e6e; border-bottom: 2px solid #6e6e6e; }
.tk-menu.wide { width: 95px; margin-left: 2px; }
.tk-menu select { width: 100%; height: 100%; padding-left: 6px; appearance: none; }
.tk-menu::after { content: ""; position: absolute; right: 6px; top: 8px; width: 16px; height: 8px; background: #f0f0f0; border: 1px solid #fff; border-right: 2px solid #8a8a8a; border-bottom: 2px solid #8a8a8a; }
.formula { align-self: center; width: 148px; margin-top: 65px; }

/* circuit builder window */
.builder { position: absolute; left: 338px; top: 233px; width: 960px; border-radius: 8px; overflow: hidden; background: #f0f0f0; box-shadow: 0 0 0 1px #9c9c9c, 0 24px 48px rgba(0,0,0,.4), 0 0 32px rgba(0,0,0,.15); }
.builder .app-title { height: 30px; background: #f0f2fa; color: #111; }
.builder .fic { margin: 0 6px 0 8px; }
.builder-body { display: grid; grid-template-columns: 119px 1fr; }
.builder aside { display: flex; flex-direction: column; align-items: flex-start; }
.builder aside p, .builder aside label { padding-left: 3px; line-height: 21px; }
.builder aside .off { color: #a5a5a5; }
.builder .tk-menu { margin-top: 2px; }
.circuit { width: 100%; height: auto; outline: 2px solid #000; outline-offset: -2px; }
.circuit text { font-size: 19px; text-anchor: middle; }
.wire { fill: none; stroke: #000; stroke-width: 2; }
.box { fill: #fff; stroke: #000; stroke-width: 2; }
.coil { fill: none; stroke: #000; stroke-width: 4; }
```
FILE: plot.js
```js
// Draws the Nyquist and Bode curves from sampled points.
const NS = 'http://www.w3.org/2000/svg';
const add = (parent, tag, attrs, text) => {
  const el = document.createElementNS(NS, tag);
  for (const k in attrs) el.setAttribute(k, attrs[k]);
  if (text) el.textContent = text;
  document.getElementById(parent).appendChild(el);
};
// Cubic Hermite interpolation through pts at x.
const at = (p, x) => {
  let i = 0;
  while (i < p.length - 2 && x > p[i + 1][0]) i++;
  const slope = k => {
    const a = p[Math.max(k - 1, 0)], b = p[Math.min(k + 1, p.length - 1)];
    return (b[1] - a[1]) / (b[0] - a[0]);
  };
  const h = p[i + 1][0] - p[i][0], t = (x - p[i][0]) / h;
  return (2*t**3 - 3*t**2 + 1) * p[i][1] + (t**3 - 2*t**2 + t) * h * slope(i)
       + (3*t**2 - 2*t**3) * p[i + 1][1] + (t**3 - t**2) * h * slope(i + 1);
};
const line = (parent, p, attrs) => {
  let d = '';
  for (let x = p[0][0]; x <= p[p.length - 1][0]; x += 2) d += (d ? 'L' : 'M') + x + ' ' + at(p, x).toFixed(1);
  add(parent, 'path', { class: 'curve', d, ...attrs });
};

const blue = [[1083,120],[1096,135],[1113,153],[1138,176],[1162,194],[1187,210],[1211,222],[1242,232],[1300,255],[1327,263],[1358,272],[1389,283],[1413,293],[1435,302],[1456,317],[1481,336],[1505,362],[1530,391],[1554,424],[1579,458],[1600,483],[1621,506],[1646,526],[1673,540],[1695,548],[1713,554],[1727,557]];
const blueFit = [[1083,130],[1113,158],[1138,178],[1187,212],[1231,233],...blue.slice(8)];
const phase = [[1299,259],[1327,255],[1352,259],[1376,269],[1392,283],[1405,300],[1419,319],[1431,339],[1450,377],[1468,417],[1487,455],[1505,492],[1520,517],[1536,533],[1549,537],[1563,533],[1575,522],[1588,503],[1600,475],[1612,444],[1628,404],[1643,361],[1658,316],[1673,275],[1689,230],[1704,182],[1713,155],[1721,128],[1726,115]];
const phaseFit = [[1299,251],[1327,246],[1355,251],[1376,266],[1396,287],[1405,300],[1419,319],[1431,339],[1450,377],[1468,417],[1487,455],[1505,491],[1520,514],[1536,531],[1549,535],[1563,531],[1575,520],[1588,502],[1600,477],[1612,450],[1643,373],[1673,289],[1704,196],[1726,132]];

for (let x = 1083; x < 1727; x += 3.95) add('bode', 'circle', { cx: x, cy: at(blue, x), r: 2.5, fill: '#174a80' });
line('bode', blueFit, { stroke: '#3f3fd8' });
for (let x = 1299; x < 1727; x += 3.9) add('bode', 'rect', { x: x - 3, y: at(phase, x) - 3.5, width: 6, height: 7, fill: '#117a42' });
line('bode', phaseFit, { stroke: '#42d43c' });

const arc = 'M242 562C247 548 254 536 264 527C284 511 306 505 342 504';
add('nyquist', 'path', { class: 'curve', d: arc, stroke: '#000', style: 'stroke-width:6' });
add('nyquist', 'path', { class: 'curve', d: arc, stroke: '#d63a3a' });
add('nyquist', 'path', { class: 'curve', d: 'M834 230l-6 9', stroke: '#d63a3a' });
for (const [cx, cy] of [[847,141],[827,161],[810,181],[795,200],[778,216],[764,233]]) add('nyquist', 'circle', { cx, cy, r: 2.5 });

for (let v = 0; v <= 200; v += 25) {
  const y = 563 - v * 2.032;
  add('ticks', 'path', { class: 'tick', d: `M236 ${y}h4` });
  add('ticks', 'text', { class: 'end', x: 232, y: y + 5 }, String(v));
}
add('ticks', 'text', { x: 340, y: 582 }, '50');
for (let v = 0; v <= 40; v += 10) {
  const y = 131 + v * 9.67;
  add('ticks', 'path', { class: 'tick', d: `M1728 ${y}h5` });
  add('ticks', 'text', { class: 'start green', x: 1736, y: y + 5 }, v ? '\u2212' + v : '0');
}
for (const y of [134, 181]) add('ticks', 'path', { class: 'tick', d: `M1078 ${y}h3` });
for (let e = 1; e <= 5; e++) {
  const x = 1298 + (e - 1) * 107;
  add('ticks', 'path', { class: 'tick', d: `M${x} 563v5` });
  add('ticks', 'text', { x: x - 3, y: 586 }, '10');
  add('ticks', 'text', { class: 'sup', x: x + 9, y: 580 }, String(e));
  if (e < 5) for (let m = 2; m < 10; m++) add('ticks', 'path', { class: 'tick', d: `M${x + 107 * Math.log10(m)} 563v3` });
}
```
